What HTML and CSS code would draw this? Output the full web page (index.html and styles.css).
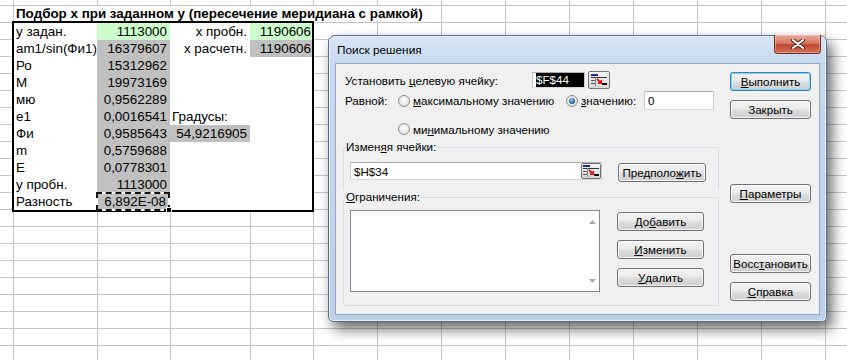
FILE: index.html
```html
<!DOCTYPE html>
<html lang="ru">
<head>
    <meta charset="UTF-8">
    <title>Поиск решения</title>
    <link rel="stylesheet" href="styles.css">
</head>
<body>
    <div class="sheet">
        <div class="sheet-title">Подбор x при заданном y (пересечение меридиана с рамкой)</div>
        <div class="calc">
            <div class="cell">у задан.</div><div class="cell num green">1113000</div><div class="cell num">x пробн.</div><div class="cell num tight green">1190606</div>
            <div class="cell">am1/sin(Фи1)</div><div class="cell num gray">16379607</div><div class="cell num">x расчетн.</div><div class="cell num tight gray">1190606</div>
            <div class="cell">Ро</div><div class="cell num gray">15312962</div><div class="cell"></div><div class="cell"></div>
            <div class="cell">М</div><div class="cell num gray">19973169</div><div class="cell"></div><div class="cell"></div>
            <div class="cell">мю</div><div class="cell num gray">0,9562289</div><div class="cell"></div><div class="cell"></div>
            <div class="cell">е1</div><div class="cell num gray">0,0016541</div><div class="cell">Градусы:</div><div class="cell"></div>
            <div class="cell">Фи</div><div class="cell num gray">0,9585643</div><div class="cell num gray">54,9216905</div><div class="cell"></div>
            <div class="cell">m</div><div class="cell num gray">0,5759688</div><div class="cell"></div><div class="cell"></div>
            <div class="cell">E</div><div class="cell num gray">0,0778301</div><div class="cell"></div><div class="cell"></div>
            <div class="cell">у пробн.</div><div class="cell num gray">1113000</div><div class="cell"></div><div class="cell"></div>
            <div class="cell">Разность</div><div class="cell num gray copied">6,892E-08</div><div class="cell"></div><div class="cell"></div>
        </div>
    </div>

    <div class="dialog">
        <div class="titlebar">
            <span class="title">Поиск решения</span>
            <span class="close">
                <svg width="14" height="10" viewBox="0 0 14 10">
                    <path d="M2 1 L12 9 M12 1 L2 9" stroke="#5b2418" stroke-width="4" stroke-linecap="round"/>
                    <path d="M2 1 L12 9 M12 1 L2 9" stroke="#fff" stroke-width="2" stroke-linecap="round"/>
                </svg>
            </span>
        </div>
        <div class="client">
            <div class="main">
                <div class="target-row">
                    <span class="target-label">Установить <u>ц</u>елевую ячейку:</span>
                    <span class="textbox target-box"><span class="sel">$F$44</span></span>
                    <span class="refbtn">
                        <svg width="16" height="12" viewBox="0 0 16 12">
                            <rect x="0" y="0" width="7" height="2" fill="#1c2a8c"/>
                            <rect x="0" y="3" width="16" height="1" fill="#333"/>
                            <rect x="0" y="6" width="5" height="1" fill="#555"/>
                            <rect x="0" y="9" width="5" height="1" fill="#555"/>
                            <rect x="4" y="3" width="1" height="9" fill="#888"/>
                            <rect x="11" y="9" width="5" height="2" fill="#111"/>
                            <path d="M6 5 L10 9 M7 9.2 H10.2 V6" stroke="#e0161a" stroke-width="1.8" fill="none"/>
                        </svg>
                    </span>
                </div>
                <div class="equal-row">
                    <span class="equal-label">Равной:</span>
                    <span class="option option-max"><span class="radio"></span><u>м</u>аксимальному значению</span>
                    <span class="option"><span class="radio checked"></span><u>з</u>начению:</span>
                    <span class="textbox value-box">0</span>
                </div>
                <div class="min-row">
                    <span class="option"><span class="radio"></span>ми<u>н</u>имальному значению</span>
                </div>
                <fieldset class="group group-changing">
                    <legend>Измен<u>я</u>я ячейки:</legend>
                    <div class="group-body">
                        <span class="textbox cells-box">$H$34
                            <span class="refbtn inner">
                                <svg width="16" height="12" viewBox="0 0 16 12">
                                    <rect x="0" y="0" width="7" height="2" fill="#1c2a8c"/>
                                    <rect x="0" y="3" width="16" height="1" fill="#333"/>
                                    <rect x="0" y="6" width="5" height="1" fill="#555"/>
                                    <rect x="0" y="9" width="5" height="1" fill="#555"/>
                                    <rect x="4" y="3" width="1" height="9" fill="#888"/>
                                    <rect x="11" y="9" width="5" height="2" fill="#111"/>
                                    <path d="M6 5 L10 9 M7 9.2 H10.2 V6" stroke="#e0161a" stroke-width="1.8" fill="none"/>
                                </svg>
                            </span>
                        </span>
                        <span class="btn guess">Предполо<u>ж</u>ить</span>
                    </div>
                </fieldset>
                <fieldset class="group group-limits">
                    <legend><u>О</u>граничения:</legend>
                    <div class="group-body">
                        <div class="listbox">
                            <div class="scroll">
                                <svg width="7" height="4" viewBox="0 0 7 4"><path d="M0 4 L3.5 0 L7 4Z" fill="#a9a9a9"/></svg>
                                <svg width="7" height="4" viewBox="0 0 7 4"><path d="M0 0 L3.5 4 L7 0Z" fill="#a9a9a9"/></svg>
                            </div>
                        </div>
                        <div class="limit-buttons">
                            <span class="btn">До<u>б</u>авить</span>
                            <span class="btn"><u>И</u>зменить</span>
                            <span class="btn"><u>У</u>далить</span>
                        </div>
                    </div>
                </fieldset>
            </div>
            <div class="side">
                <span class="btn default"><u>В</u>ыполнить</span>
                <span class="btn close-btn">Закрыть</span>
                <span class="btn params"><u>П</u>араметры</span>
                <span class="btn reset">Восс<u>т</u>ановить</span>
                <span class="btn help-btn"><u>С</u>правка</span>
            </div>
        </div>
    </div>
</body>
</html>
```

FILE: styles.css
```css
body {
  margin: 0;
  background: #fff;
  font-family: "Liberation Sans", Arial, sans-serif;
}

/* sheet */

.sheet {
  height: 360px;
  box-sizing: border-box;
  padding-top: 6px;
  overflow: hidden;
  font-size: 13.4px;
  background-image:
    repeating-linear-gradient(to right, #c6c6c6 0 1px, transparent 1px 64px),
    linear-gradient(to right, transparent 13px, #c6c6c6 13px 14px, transparent 14px 97px,
      #c6c6c6 97px 98px, transparent 98px 170px, #c6c6c6 170px 171px,
      transparent 171px 250px, #c6c6c6 250px 251px, transparent 251px),
    linear-gradient(#c6c6c6 0 1px, transparent 1px);
  background-size: 534px 100%, 100% 100%, 100% 17px;
  background-position: 313px 0, 0 0, 0 5px;
  background-repeat: no-repeat, no-repeat, repeat;
}

.sheet-title {
  margin-left: 14px;
  width: 427px;
  height: 15px;
  line-height: 15px;
  padding-left: 2px;
  box-sizing: border-box;
  background: #fff;
  font-weight: bold;
  white-space: nowrap;
}

.calc {
  margin-left: 12px;
  width: 302px;
  box-sizing: border-box;
  border: 2px solid #000;
  background: #fff;
  display: grid;
  grid-template-columns: 83px 73px 80px 62px;
  grid-auto-rows: 17px;
}

.cell {
  line-height: 18px;
  padding: 0 2px;
  white-space: nowrap;
  overflow: hidden;
}

.cell.num {
  text-align: right;
  padding-right: 3px;
}

.cell.tight {
  padding-right: 1px;
}

.cell.gray {
  background-color: #c0c0c0;
}

.cell.green {
  background-color: #ccffcc;
}

.cell.copied {
  position: relative;
  overflow: visible;
  margin: -1px 0 -1px -1px;
  line-height: 15px;
  padding-right: 2px;
  border: 2px dashed #111;
  background: linear-gradient(#c0c0c0, #c0c0c0) padding-box, #fff border-box;
}

.cell.copied::after {
  content: '';
  position: absolute;
  right: -4px;
  bottom: -4px;
  width: 4px;
  height: 4px;
  background: #000;
  border: 1px solid #fff;
}

/* dialog window */

.dialog {
  position: absolute;
  left: 328px;
  top: 35px;
  width: 499px;
  height: 287px;
  box-sizing: border-box;
  border: 1px solid #566f8e;
  border-radius: 7px 7px 5px 5px;
  padding: 0 6px 6px;
  background: linear-gradient(#d9e6f5 0, #c6d9ef 28px, #bcd1e9 100%);
  box-shadow: inset 0 0 0 1px rgba(255, 255, 255, .55), 5px 7px 14px rgba(0, 0, 0, .6);
  font-size: 11.6px;
  color: #000;
}

.titlebar {
  display: flex;
  align-items: center;
  height: 27px;
}

.title {
  padding-left: 2px;
  font-size: 11.8px;
}

.close {
  margin-left: auto;
  align-self: flex-start;
  margin-top: -1px;
  margin-right: -1px;
  width: 47px;
  height: 19px;
  box-sizing: border-box;
  display: flex;
  align-items: center;
  justify-content: center;
  border: 1px solid #6b2c20;
  border-top: none;
  border-radius: 0 0 4px 4px;
  background: linear-gradient(#e8aa9c 0%, #d87966 45%, #c2452b 55%, #d0745c 100%);
  box-shadow: inset 0 0 0 1px rgba(255, 210, 200, .45);
}

.client {
  height: 252px;
  box-sizing: border-box;
  border: 1px solid #93a8c2;
  background: #f0f0f0;
  padding: 7px 8px 0 7px;
  display: flex;
}

.main {
  width: 376px;
}

u {
  text-decoration: underline;
  text-underline-offset: 1px;
}

.textbox {
  box-sizing: border-box;
  background: #fff;
  border: 1px solid #abadb3;
  border-left-color: #c6c9cf;
  border-right-color: #c6c9cf;
  border-bottom-color: #d6d9de;
  display: flex;
  align-items: center;
}

.refbtn {
  width: 22px;
  height: 18px;
  box-sizing: border-box;
  border: 1px solid #707070;
  border-radius: 2px;
  background: linear-gradient(#f6f6f6, #e6e6e6 50%, #d6d6d6);
  display: flex;
  align-items: center;
  justify-content: center;
}

.target-row {
  display: flex;
  align-items: center;
  height: 18px;
}

.target-label {
  width: 187px;
  padding-left: 2px;
}

.target-box {
  width: 53px;
  height: 16px;
  padding-left: 3px;
  margin-right: 3px;
}

.sel {
  background: #000;
  color: #fff;
  height: 100%;
  line-height: 14px;
  flex: 1;
}

.equal-row {
  margin-top: 2px;
  display: flex;
  align-items: center;
  height: 19px;
}

.equal-label {
  width: 53px;
  padding-left: 2px;
}

.option {
  display: flex;
  align-items: center;
}

.option-max {
  width: 168px;
}

.radio {
  width: 12px;
  height: 12px;
  box-sizing: border-box;
  border: 1px solid #8e8f8f;
  border-radius: 50%;
  background: radial-gradient(circle at 50% 40%, #fdfdfd 0, #e4e4e4 70%, #d2d2d2 100%);
  margin-right: 3px;
  position: relative;
}

.radio.checked::after {
  content: '';
  position: absolute;
  left: 2px;
  top: 2px;
  width: 6px;
  height: 6px;
  border-radius: 50%;
  background: radial-gradient(circle at 40% 35%, #9fd3f7 0, #2f6bb3 55%, #143f7a 100%);
}

.value-box {
  margin-left: auto;
  margin-right: 5px;
  width: 70px;
  height: 19px;
  padding-left: 3px;
}

.min-row {
  margin-top: 11px;
  height: 16px;
  display: flex;
  align-items: center;
  padding-left: 55px;
}

/* group boxes */

.group {
  margin: 0;
  padding: 0;
  border: 1px solid #d5dfe5;
  min-width: 0;
}

.group legend {
  margin-left: 2px;
  padding: 0;
  line-height: 14px;
}

.group-changing {
  margin-top: 3px;
  border-bottom: none;
  border-radius: 3px 3px 0 0;
}

.group-limits {
  border-radius: 3px;
}

.group-body {
  display: flex;
  padding-left: 6px;
}

.group-changing .group-body {
  padding-top: 8px;
  padding-bottom: 8px;
  align-items: flex-start;
}

.cells-box {
  width: 252px;
  height: 18px;
  padding-left: 3px;
  justify-content: space-between;
}

.refbtn.inner {
  height: 16px;
  width: 20px;
}

.guess {
  margin-left: 16px;
  margin-top: 1px;
  width: 88px;
}

.group-limits .group-body {
  padding-top: 6px;
  padding-bottom: 13px;
}

.listbox {
  width: 250px;
  height: 82px;
  box-sizing: border-box;
  border: 1px solid #828790;
  background: #fff;
  display: flex;
  justify-content: flex-end;
}

.scroll {
  width: 14px;
  padding: 9px 0 8px;
  display: flex;
  flex-direction: column;
  justify-content: space-between;
  align-items: center;
}

.limit-buttons {
  margin-left: 17px;
  padding-top: 2px;
  display: flex;
  flex-direction: column;
  gap: 9px;
}

.limit-buttons .btn {
  width: 87px;
}

/* buttons */

.btn {
  height: 19px;
  box-sizing: border-box;
  display: flex;
  align-items: center;
  justify-content: center;
  border: 1px solid #707070;
  border-radius: 3px;
  background: linear-gradient(#f2f2f2 0%, #ebebeb 48%, #dddddd 52%, #cfcfcf 100%);
  box-shadow: inset 0 0 0 1px rgba(255, 255, 255, .75);
  white-space: nowrap;
}

.btn.default {
  border-color: #3c7fb1;
  box-shadow: inset 0 0 0 1px #7fd6f7;
}

.side {
  margin-left: 11px;
  padding-top: 1px;
  width: 81px;
  display: flex;
  flex-direction: column;
}

.close-btn {
  margin-top: 9px;
}

.params {
  margin-top: 65px;
}

.reset {
  margin-top: 51px;
}

.help-btn {
  margin-top: 9px;
}
```
